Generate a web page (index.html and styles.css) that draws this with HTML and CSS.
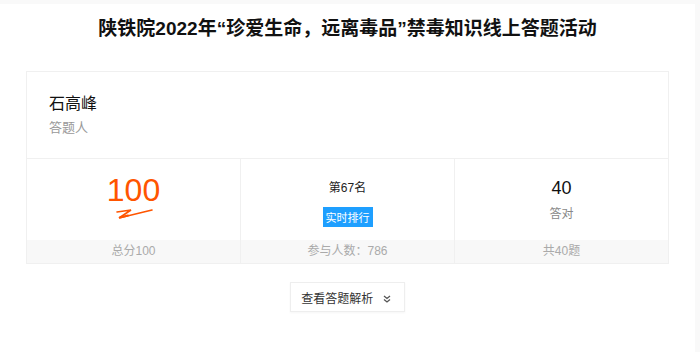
FILE: index.html
```html
<!DOCTYPE html>
<html lang="zh-CN">
<head>
    <meta charset="UTF-8">
    <meta name="viewport" content="width=device-width, initial-scale=1.0">
    <title>答题结果</title>
    <link rel="stylesheet" href="styles.css">
</head>
<body>
    <div class="page">
        <h1 class="title">陕铁院2022年“珍爱生命，远离毒品”禁毒知识线上答题活动</h1>
        <div class="result-card">
            <div class="user-info">
                <div class="user-name">石高峰</div>
                <div class="user-role">答题人</div>
            </div>
            <div class="stats">
                <div class="stat">
                    <div class="stat-body score-body">
                        <div class="score">100</div>
                        <svg class="sign" width="40" height="16" viewBox="0 0 40 16">
                            <path d="M3 6 L17 4 L5 12 L38 4" fill="none" stroke="#ff5500" stroke-width="1.6" stroke-linejoin="miter" stroke-linecap="round"/>
                            <path d="M6 11.5 L14 9.5" fill="none" stroke="#ff5500" stroke-width="2.2" stroke-linecap="round"/>
                        </svg>
                    </div>
                    <div class="stat-foot">总分100</div>
                </div>
                <div class="stat">
                    <div class="stat-body rank-body">
                        <div class="rank">第67名</div>
                        <button class="rank-btn">实时排行</button>
                    </div>
                    <div class="stat-foot">参与人数：786</div>
                </div>
                <div class="stat">
                    <div class="stat-body correct-body">
                        <div class="correct">40</div>
                        <div class="correct-label">答对</div>
                    </div>
                    <div class="stat-foot">共40题</div>
                </div>
            </div>
        </div>
        <div class="actions">
            <button class="analysis-btn">查看答题解析
                <svg width="10" height="10" viewBox="0 0 10 10">
                    <path d="M2 2 L5 4.5 L8 2 M2 5.5 L5 8 L8 5.5" fill="none" stroke="#555" stroke-width="1.3"/>
                </svg>
            </button>
        </div>
    </div>
</body>
</html>
```

FILE: styles.css
```css
body {
    margin: 0;
    background-color: #f9f9f9;
    font-family: "Liberation Sans", Arial, "Noto Sans CJK SC", sans-serif;
    color: #333;
}

.page {
    width: 695px;
    height: 348px;
    margin-top: 4px;
    background-color: #fff;
    padding-top: 1px;
    box-sizing: border-box;
}

.title {
    margin: 11px 0 0;
    text-align: center;
    font-size: 19px;
    line-height: 26px;
    font-weight: bold;
    color: #111;
}

.result-card {
    margin: 29px 26px 0 26px;
    width: 643px;
    border: 1px solid #f0f0f0;
    box-sizing: border-box;
}

.user-info {
    padding: 20px 22px 21px;
    border-bottom: 1px solid #f0f0f0;
}

.user-name {
    font-size: 16px;
    line-height: 24px;
    color: #111;
}

.user-role {
    margin-top: 3px;
    font-size: 13px;
    line-height: 18px;
    color: #999;
}

.stats {
    display: flex;
}

.stat {
    flex: 1;
    border-left: 1px solid #f0f0f0;
    text-align: center;
}

.stat:first-child {
    border-left: none;
}

.stat-body {
    height: 81px;
    box-sizing: border-box;
    display: flex;
    flex-direction: column;
    align-items: center;
}

.score-body {
    padding-top: 15px;
}

.rank-body {
    padding-top: 21px;
}

.correct-body {
    padding-top: 18px;
}

.stat-foot {
    height: 23px;
    line-height: 23px;
    background-color: #f8f8f8;
    font-size: 12px;
    color: #aaa;
}

.score {
    font-size: 32px;
    line-height: 32px;
    color: #ff5500;
}

.sign {
    display: block;
}

.rank {
    font-size: 12px;
    line-height: 16px;
    color: #222;
}

.rank-btn {
    margin-top: 11px;
    padding: 0 3px;
    height: 20px;
    border: none;
    background-color: #1e9fff;
    color: #fff;
    font-family: inherit;
    font-size: 11px;
}

.correct {
    font-size: 18px;
    line-height: 22px;
    color: #111;
}

.correct-label {
    margin-top: 7px;
    font-size: 12px;
    line-height: 16px;
    color: #888;
}

.actions {
    margin-top: 18px;
    text-align: center;
}

.analysis-btn {
    height: 30px;
    padding: 0 12px 0 10px;
    border: 1px solid #eee;
    background-color: #fff;
    font-family: inherit;
    font-size: 12px;
    color: #333;
    box-shadow: 0 1px 2px rgba(0,0,0,0.04);
}

.analysis-btn svg {
    margin-left: 5px;
    vertical-align: -1px;
}
```
